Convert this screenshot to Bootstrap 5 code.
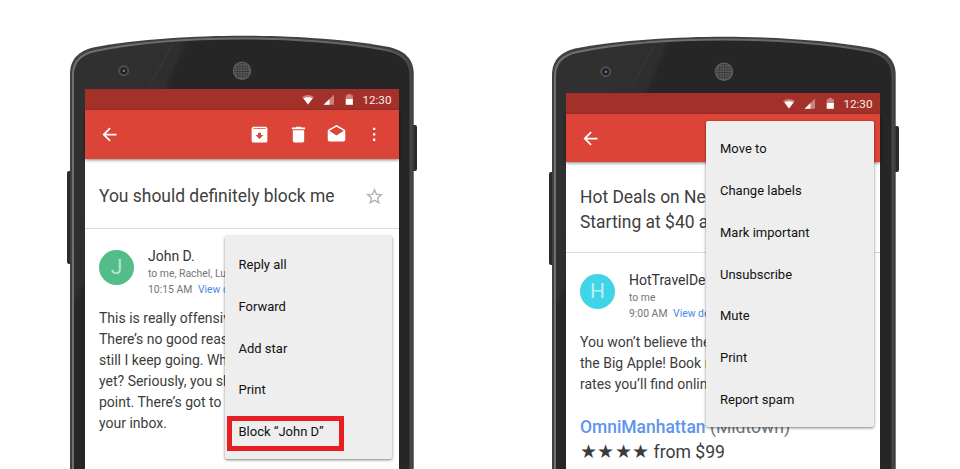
<!DOCTYPE html>
<html lang="en">
<head>
<meta charset="utf-8">
<meta name="viewport" content="width=device-width, initial-scale=1">
<title>Block and unsubscribe</title>
<link href="https://cdn.jsdelivr.net/npm/bootstrap@5.3.0/dist/css/bootstrap.min.css" rel="stylesheet">
<style>
body{font-family:Roboto,"Liberation Sans",sans-serif;background:#fff;color:#3c3c3c;width:960px;height:469px;overflow:hidden}
.stage{height:469px;padding-left:67px;gap:132px}
.phone{width:350px;height:469px;padding:89px 18px 0;flex:none}
.phone-b{padding:93px 18px 0 17px}
.shell{left:0;top:0;width:350px;height:469px}
.phone-b .shell{top:1px}
.screen{background:#fff;width:314px;height:100%}
.statusbar{height:21px;background:#a4302a;color:#fbe9e7;font-size:11.7px;line-height:21px;padding:1px 7.500px 0 0}
.toolbar{height:49px;background:#db4437;padding:0 14px;box-shadow:0 1px 3px rgba(0,0,0,.5)}
.phone-b .toolbar{height:48px}
.icons{gap:17.2px}
.subject{height:70px;border-bottom:1px solid #d9d9d9;padding:5px 16px 0 14px;font-size:17.45px;line-height:24.5px;color:#404040;white-space:nowrap}
.phone-b .subject{height:91px;padding-top:5px}
.sender{padding:17px 14px 0}
.avatar{width:35px;height:35px;font-size:21px;margin-top:4px;flex:none}
.av-green{background:#52bd89;color:#b9e6cf}
.av-cyan{background:#3fd5e6;color:#b7f1f7}
.who{white-space:nowrap;font-size:10.4px;line-height:15.6px;color:#757575;padding-left:14px}
.who-name{font-size:14px;line-height:20.4px;color:#333}
.who a{color:#4a86e8;text-decoration:none;margin-left:3px}
.msg{font-size:14px;line-height:20.95px;white-space:nowrap;padding:0 14px;margin-top:10.6px}
.deal{padding:0 14px;margin-top:20px;font-size:17.6px;line-height:24.5px;white-space:nowrap}
.deal a{color:#5e94ea;font-weight:500;font-size:17.45px;text-decoration:none}
.rating{letter-spacing:.3px;font-size:18.5px}
.popmenu{width:167.500px;background:#eee;border-radius:2px;box-shadow:0 1px 3px rgba(0,0,0,.5);font-size:13px;color:#111;padding:7.800px 0 6px}
.pop-a{left:139.500px;top:147px;height:223px}
.pop-b{left:140px;top:28px;height:305.500px;padding-top:7px}
.popmenu li{height:41.8px;padding-left:14px}
.popmenu .marked{left:2.500px;top:180px;width:117px;height:35px;border:5px solid #e81e25}
</style>
<script src="https://cdn.jsdelivr.net/npm/bootstrap@5.3.0/dist/js/bootstrap.bundle.min.js"></script>
</head>
<body>
<svg width="0" height="0" class="position-absolute" aria-hidden="true">
<defs>
<linearGradient id="rim" x1="0" x2="1" y1="0" y2="0"><stop offset="0" stop-color="#707070"/><stop offset=".55" stop-color="#6c6c6c"/><stop offset=".92" stop-color="#606060"/><stop offset="1" stop-color="#484848"/></linearGradient>
<linearGradient id="glass" gradientUnits="userSpaceOnUse" x1="75" y1="60" x2="108" y2="74"><stop offset="0" stop-color="#303030"/><stop offset=".85" stop-color="#2e2e2e"/><stop offset="1" stop-color="#262626"/></linearGradient>
<pattern id="mesh" width="2.6" height="2.6" patternUnits="userSpaceOnUse"><rect width="2.6" height="2.6" fill="#5c5c5c"/><circle cx="1.3" cy="1.3" r=".9" fill="#282828"/></pattern>
<symbol id="shell" viewBox="0 0 350 469">
<path fill="#2b2b2b" d="M0 173q0-2 2-2h3v93H2q-2 0-2-2zM345 125h3q2 0 2 2v42q0 2-2 2h-3z"/>
<path fill="#404040" d="M3 475V74C3 59 12 51 26 47.500C70 39 130 35.700 175 35.700S280 39 322 47C338 51 346.700 59 346.700 74V475Z"/>
<path fill="url(#glass)" stroke="url(#rim)" stroke-width="2" d="M6 475V75C6 62 14 54 28 51C72 42 130 38.500 175 38.500S278 42 319 50C335 53 343.500 62 343.500 75V475Z"/>
<path d="M105 45L82 87" stroke="#343434" stroke-width="2.500"/>
<circle cx="56.700" cy="70.700" r="5" fill="#464646" stroke="#555"/><circle cx="56.700" cy="70.700" r="3.200" fill="#1b1b26"/><circle cx="56.900" cy="70.800" r="1.400" fill="#70708c"/>
<circle cx="175" cy="70.700" r="8.600" fill="url(#mesh)" stroke="#606060" stroke-width="1.300"/>
</symbol>
<symbol id="sys" viewBox="0 0 56 14">
<path fill="#cc817d" d="M0 4Q6 0 12 4L6 11.500Z"/><path fill="#fff" d="M1.400 5.300Q6 3 10.600 5.300L6 11.500Z"/>
<path fill="#cc817d" d="M32 1.500V11.800H21.700Z"/><path fill="#fff" d="M27.500 6V11.800H21.700Z"/>
<path fill="#cc817d" d="M43.700 2.300h2V1h3.200v1.300h2V6h-7.200z"/><path fill="#fff" d="M43.700 6h7.200v5.800h-7.200z"/>
</symbol>
<symbol id="back" viewBox="0 0 24 24"><path d="M20 11H7.830l5.590-5.590L12 4l-8 8 8 8 1.410-1.410L7.830 13H20z"/></symbol>
<symbol id="archive" viewBox="0 0 24 24"><path fill-rule="evenodd" d="M4.500 3h15L21 4.800V19.500Q21 21 19.500 21h-15Q3 21 3 19.500V4.800ZM5 4.500L4.800 5.500H19.200L19 4.500ZM10.300 10V12.500H7.500L12 17L16.500 12.500H13.700V10Z"/></symbol>
<symbol id="trash" viewBox="0 0 24 24"><path d="M5.500 7v12c0 1.100.9 2 2 2h9c1.100 0 2-.9 2-2V7zM19.500 4h-4l-1-1h-5l-1 1h-4v2h15z"/></symbol>
<symbol id="mail" viewBox="0 0 24 24"><path d="M22 8c0-.72-.37-1.350-.94-1.700L12 1 2.950 6.300C2.380 6.650 2 7.280 2 8v10c0 1.100.9 2 2 2h16c1.100 0 2-.9 2-2zM12 13L3.740 7.840 12 3l8.260 4.840z"/></symbol>
<symbol id="dots" viewBox="0 0 24 24"><path d="M10.300 4.300h2.600v2.600h-2.600zM10.300 10.500h2.600v2.600h-2.600zM10.300 16.700h2.600v2.600h-2.600z"/></symbol>
<symbol id="star" viewBox="2 2 20 20"><path d="M22 9.240l-7.190-.62L12 2 9.190 8.630 2 9.240l5.460 4.730L5.820 21 12 17.270 18.180 21l-1.630-7.030zM12 15.400l-3.760 2.270 1-4.280-3.320-2.880 4.380-.38L12 6.100l1.710 4.040 4.380.38-3.320 2.880 1 4.280z"/></symbol>
</defs>
</svg>
<main class="stage d-flex">
<section class="phone position-relative">
<svg class="shell position-absolute"><use href="#shell"/></svg>
<div class="screen position-relative">
<div class="statusbar d-flex align-items-center justify-content-end"><svg width="56" height="14"><use href="#sys"/></svg><span class="ps-1">12:30</span></div>
<div class="toolbar d-flex align-items-center position-relative">
<svg width="21" height="21" fill="#fff"><use href="#back"/></svg>
<div class="d-flex align-items-center ms-auto icons"><svg width="21" height="21" fill="#fff"><use href="#archive"/></svg><svg width="21" height="21" fill="#fff"><use href="#trash"/></svg><svg width="21" height="21" fill="#fff"><use href="#mail"/></svg><svg width="21" height="21" fill="#fff"><use href="#dots"/></svg></div>
</div>
<div class="subject d-flex align-items-center justify-content-between"><span>You should definitely block me</span><svg width="17" height="17" class="mt-0" fill="#b0b0b0"><use href="#star"/></svg></div>
<div class="sender d-flex"><div class="avatar av-green rounded-circle d-flex align-items-center justify-content-center">J</div>
<div class="who"><div class="who-name">John D.</div><div>to me, Rachel, Lu</div><div>10:15 AM <a href="#">View d</a></div></div></div>
<p class="msg mb-0">This is really offensiv<br>There’s no good reas<br>still I keep going. Wh<br>yet? Seriously, you sh<br>point. There’s got to<br>your inbox.</p>
<ul class="popmenu pop-a position-absolute list-unstyled mb-0">
<li class="d-flex align-items-center">Reply all</li><li class="d-flex align-items-center">Forward</li><li class="d-flex align-items-center">Add star</li><li class="d-flex align-items-center">Print</li><li class="d-flex align-items-center">Block “John D”</li>
<li class="marked position-absolute p-0" aria-hidden="true"></li>
</ul>
</div>
</section>
<section class="phone phone-b position-relative">
<svg class="shell position-absolute"><use href="#shell"/></svg>
<div class="screen position-relative">
<div class="statusbar d-flex align-items-center justify-content-end"><svg width="56" height="14"><use href="#sys"/></svg><span class="ps-1">12:30</span></div>
<div class="toolbar d-flex align-items-center position-relative"><svg width="21" height="21" fill="#fff"><use href="#back"/></svg></div>
<div class="subject d-flex align-items-center"><span>Hot Deals on Ne<br>Starting at $40 a</span></div>
<div class="sender d-flex"><div class="avatar av-cyan rounded-circle d-flex align-items-center justify-content-center">H</div>
<div class="who"><div class="who-name">HotTravelDe</div><div>to me</div><div>9:00 AM <a href="#">View de</a></div></div></div>
<p class="msg mb-0">You won’t believe the<br>the Big Apple! Book n<br>rates you’ll find onlin</p>
<div class="deal"><a href="#">OmniManhattan</a> <span class="text-secondary">(Midtown)</span><br><span class="rating">★★★★</span> from $99</div>
<ul class="popmenu pop-b position-absolute list-unstyled mb-0">
<li class="d-flex align-items-center">Move to</li><li class="d-flex align-items-center">Change labels</li><li class="d-flex align-items-center">Mark important</li><li class="d-flex align-items-center">Unsubscribe</li><li class="d-flex align-items-center">Mute</li><li class="d-flex align-items-center">Print</li><li class="d-flex align-items-center">Report spam</li>
</ul>
</div>
</section>
</main>
</body>
</html>
